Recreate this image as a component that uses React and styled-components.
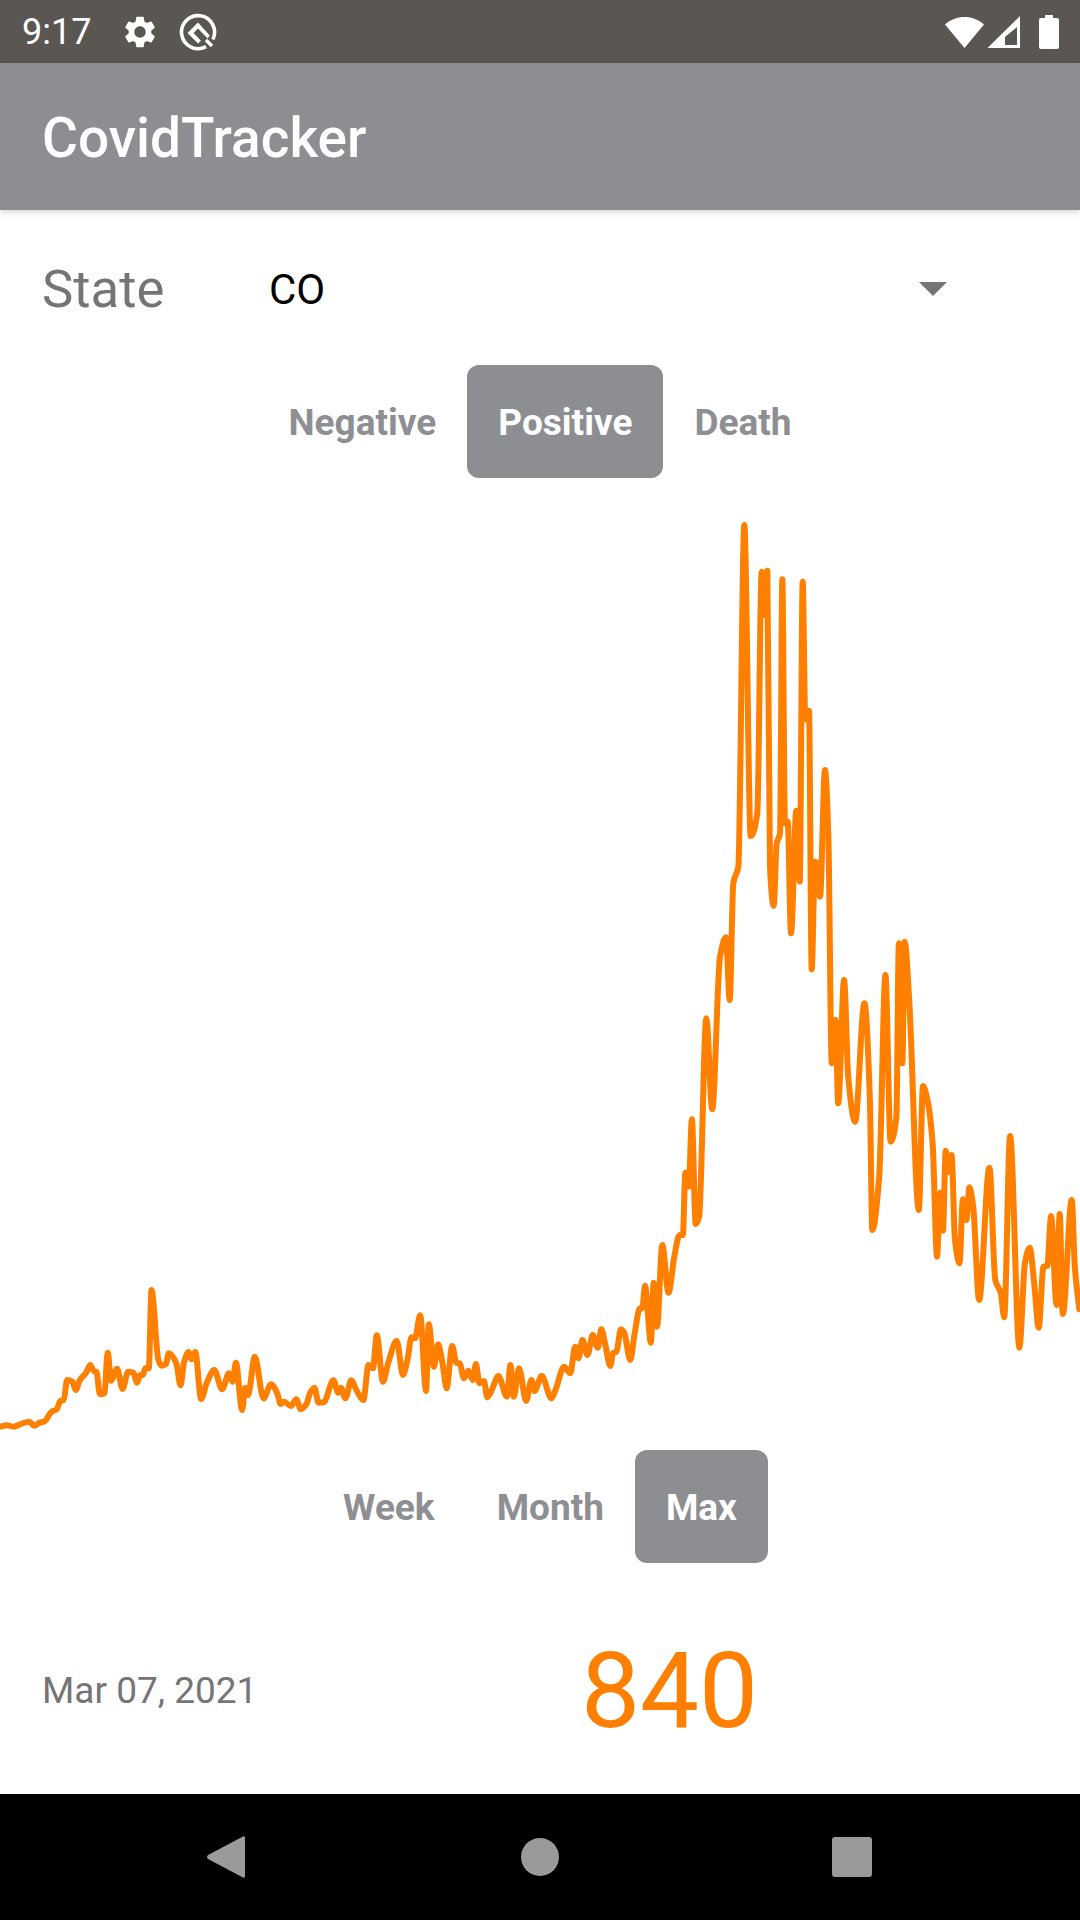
import React from "react";
import styled, { createGlobalStyle } from "styled-components";
import { MdSettings } from "react-icons/md";

const Global = createGlobalStyle`
  html, body { margin: 0; padding: 0; background: #fff; }
  * { box-sizing: border-box; }
`;

const Screen = styled.div`
  width: 1080px; height: 1920px; display: flex; flex-direction: column;
  background: #fff; overflow: hidden; font-family: Roboto, "Liberation Sans", sans-serif;
`;
const StatusBar = styled.div`
  height: 63px; flex: none; background: #5a5652; display: flex; align-items: center;
  padding: 0 21px 0 22px; color: #fff;
`;
const Clock = styled.span`font-size: 36px; width: 99px; flex: none;`;
const StatusLeft = styled.div`display: flex; align-items: center; gap: 20px; flex: 1;`;
const StatusRight = styled.div`display: flex; align-items: center;`;
const Icon = styled.svg`display: block; flex: none; margin-right: ${p => p.$mr || 0}px;`;
const AppBar = styled.header`
  height: 147px; flex: none; background: #8d8e92; display: flex; align-items: center; padding: 3px 42px 0;
  box-shadow: 0 2px 6px rgba(0,0,0,.18); position: relative;
`;
const Title = styled.h1`margin: 0; font-size: 55px; font-weight: 500; color: #fff;`;
const StateRow = styled.div`
  height: 155px; flex: none; display: flex; align-items: center; padding: 2px 42px 0;
`;
const StateLabel = styled.span`font-size: 52.7px; color: #757575; width: 227px; flex: none;`;
const StateValue = styled.span`font-size: 42px; color: #000; flex: 1; padding-top: 1px;`;
const Caret = styled.span`
  width: 0; height: 0; border-left: 14px solid transparent; border-right: 14px solid transparent;
  border-top: 14px solid #757575; margin-right: 91px;
`;
const Segments = styled.div`display: flex; justify-content: center; flex: none;`;
const Segment = styled.div`
  height: 113px; padding: 1px 31px 0; display: flex; align-items: center; border-radius: 12px;
  font-size: 37px; font-weight: 700; color: ${p => (p.$active ? "#fff" : "#8e8f93")};
  background: ${p => (p.$active ? "#8d8e92" : "transparent")};
`;
const ChartWrap = styled.div`height: 972px; flex: none; width: 1080px;`;
const Footer = styled.div`
  flex: 1; display: flex; align-items: center; padding: 26px 42px 0;
`;
const DateText = styled.span`font-size: 37px; color: #757575; width: 539px; flex: none; margin-top: -3px;`;
const Value = styled.span`font-size: 105px; color: #ff7f00;`;
const NavBar = styled.nav`
  height: 126px; flex: none; background: #000; display: flex; align-items: center; justify-content: center;
`;
const NavSlot = styled.div`width: 312px; display: flex; justify-content: center;`;

const z3 = [[0,680],[20,676],[40,680],[60,672],[85,665],[100,677],[115,668],[128,665],[150,635],[165,628],[175,603],[185,600],[195,540],[210,545],[220,570],[232,540],[250,518],[262,495],[272,513],[280,515],[290,582],[303,580],[313,458],[322,542],[340,506],[356,567],[372,515],[387,518],[398,548],[407,525],[415,525],[422,505],[432,505],[440,270],[460,480],[470,497],[482,492],[490,460],[512,490],[524,556],[535,485],[548,456],[556,478],[567,456],[584,597],[600,550],[622,510],[645,568],[665,520],[675,545],[685,488],[703,630],[712,563],[720,585],[740,470],[765,595],[787,553],[805,580],[815,612],[825,605],[845,618],[860,598],[873,627],[890,612],[900,580],[913,563],[925,608],[940,607],[968,541],[982,578],[990,563],[1003,595],[1020,541],[1035,570],[1055,600],[1070,495],[1083,505],[1094,406],[1112,545],[1127,490],[1152,422],[1170,525],[1183,480],[1195,412],[1205,415],[1220,346],[1237,573],[1245,373],[1260,500],[1272,433],[1285,490],[1297,565],[1313,438],[1325,488],[1335,490],[1347,535],[1360,512],[1373,540],[1382,492],[1392,550],[1405,543],[1415,592],[1430,565],[1447,528],[1472,590],[1482,495],[1492,590],[1507,505],[1528,603],[1543,540],[1552,573]];
const z4a = [[5,1128],[33,1195],[45,1170],[70,1100],[88,1120],[102,1040],[112,1075],[123,1020],[138,1065],[153,1005],[168,1043],[178,988],[190,1035],[204,1098],[212,1060],[222,1055],[235,988],[245,1000],[262,1080],[275,1000],[290,925],[297,925],[305,857],[322,1028],[330,848],[340,980],[355,735],[373,878],[390,770],[405,705],[415,705],[422,518],[432,560],[441,358],[452,672],[462,650],[483,55],[500,328]];
const z5 = [[120,1370],[138,1312],[149,1500],[160,1150],[175,1100],[193,75],[212,1008],[232,940],[245,215],[254,345],[262,212],[270,1100],[281,1217],[290,1030],[300,1000],[307,238],[315,970],[323,965],[333,1300],[349,932],[359,1145],[368,245],[376,658],[387,632],[395,1408],[405,1085],[412,1090],[420,1190],[435,810],[445,1000]];
const z4b = [[847,190],[858,60],[866,310],[883,-60],[895,230],[915,365],[942,10],[958,300],[965,690],[985,530],[1003,-75],[1018,425],[1035,350],[1042,-170],[1052,190],[1059,-175],[1072,0],[1100,630],[1112,258],[1125,300],[1140,430],[1153,770],[1162,578],[1170,692],[1178,452],[1186,515],[1195,465],[1205,720],[1218,790],[1228,598],[1238,660],[1247,562],[1258,620],[1275,900],[1305,503],[1322,840],[1338,880],[1348,952],[1365,408],[1392,1043],[1408,790],[1422,743],[1435,850],[1448,983],[1462,800],[1473,798],[1484,648],[1500,915],[1509,642],[1518,942],[1544,600],[1553,800],[1566,928]];

const K = 540 / 1568;
const points = [
  ...z3.map(([x, y]) => [x * K, 1200 + y / 3]),
  ...z4a.map(([x, y]) => [540 + x * K, 1000 + y / 3]),
  ...z5.map(([x, y]) => [680 + x / 3, 500 + y / 3]),
  ...z4b.map(([x, y]) => [540 + x * K, 1000 + y / 3]),
];

// monotone cubic interpolation: peaks stay at their data points and come out rounded
function monotonePath(pts) {
  const n = pts.length;
  const d = [];
  for (let i = 0; i < n - 1; i++) d.push((pts[i + 1][1] - pts[i][1]) / (pts[i + 1][0] - pts[i][0]));
  const m = pts.map((_, i) => {
    if (i === 0) return d[0];
    if (i === n - 1) return d[n - 2];
    if (d[i - 1] * d[i] <= 0) return 0;
    const h0 = pts[i][0] - pts[i - 1][0];
    const h1 = pts[i + 1][0] - pts[i][0];
    return (3 * (h0 + h1)) / ((2 * h1 + h0) / d[i - 1] + (h1 + 2 * h0) / d[i]);
  });
  let s = `M${pts[0][0].toFixed(1)} ${pts[0][1].toFixed(1)}`;
  for (let i = 0; i < n - 1; i++) {
    const h = (pts[i + 1][0] - pts[i][0]) / 3;
    s += `C${(pts[i][0] + h).toFixed(1)} ${(pts[i][1] + m[i] * h).toFixed(1)} ${(pts[i + 1][0] - h).toFixed(1)} ${(pts[i + 1][1] - m[i + 1] * h).toFixed(1)} ${pts[i + 1][0].toFixed(1)} ${pts[i + 1][1].toFixed(1)}`;
  }
  return s;
}

const QIcon = () => (
  <Icon width="38" height="38" viewBox="0 0 38 38">
    <path d="M27 33.6A16.5 16.5 0 1 1 33.8 26.5" fill="none" stroke="#fff" strokeWidth="3.6" />
    <path d="M19 9.5L8.5 20 19 30.5l3-2.8-7.4-7.7L19 15.6l9.6 9.8 2.2-3z" fill="#fff" />
    <path d="M27 27l6 6" stroke="#fff" strokeWidth="3.6" />
  </Icon>
);

const WifiIcon = () => (
  <Icon $mr={1} width="42" height="34" viewBox="0 0 42 34">
    <path d="M1 9.5C6.5 4.500 13.500 2 20.500 2S34.500 4.500 40 9.500L20.500 33z" fill="#fff" />
  </Icon>
);

const SignalIcon = () => (
  <Icon $mr={18} width="34" height="34" viewBox="0 0 34 34">
    <path d="M33 1V33H0.500Z" fill="#fff" />
    <path d="M18 22L30 12V30H18Z" fill="#5a5652" />
  </Icon>
);

const BatteryIcon = () => (
  <Icon width="20" height="34" viewBox="0 0 20 34">
    <path d="M6 0H14V3H18Q20 3 20 5V32Q20 34 18 34H2Q0 34 0 32V5Q0 3 2 3H6Z" fill="#fff" />
  </Icon>
);

export default function App() {
  return (
    <Screen>
      <Global />
      <StatusBar>
        <Clock>9:17</Clock>
        <StatusLeft>
          <MdSettings size={38} color="#fff" />
          <QIcon />
        </StatusLeft>
        <StatusRight>
          <WifiIcon />
          <SignalIcon />
          <BatteryIcon />
        </StatusRight>
      </StatusBar>
      <AppBar><Title>CovidTracker</Title></AppBar>
      <StateRow>
        <StateLabel>State</StateLabel>
        <StateValue>CO</StateValue>
        <Caret />
      </StateRow>
      <Segments>
        <Segment>Negative</Segment>
        <Segment $active>Positive</Segment>
        <Segment>Death</Segment>
      </Segments>
      <ChartWrap>
        <svg width="1080" height="972" viewBox="0 478 1080 972" style={{ display: "block" }}>
          <path d={monotonePath(points)} fill="none" stroke="#ff7f00" strokeWidth="6" strokeLinejoin="round" strokeLinecap="round" />
        </svg>
      </ChartWrap>
      <Segments>
        <Segment>Week</Segment>
        <Segment>Month</Segment>
        <Segment $active>Max</Segment>
      </Segments>
      <Footer>
        <DateText>Mar 07, 2021</DateText>
        <Value>840</Value>
      </Footer>
      <NavBar>
        <NavSlot>
          <Icon $mr={4} width="40" height="44" viewBox="0 0 40 44">
            <path d="M37 1.500Q39 0.500 39 3V41Q39 43.500 37 42.500L2 24Q0 22 2 20Z" fill="#9a9a9a" />
          </Icon>
        </NavSlot>
        <NavSlot>
          <Icon width="40" height="40" viewBox="0 0 40 40"><circle cx="20" cy="20" r="19" fill="#9a9a9a" /></Icon>
        </NavSlot>
        <NavSlot>
          <Icon width="40" height="40" viewBox="0 0 40 40"><rect width="40" height="40" rx="3" fill="#9a9a9a" /></Icon>
        </NavSlot>
      </NavBar>
    </Screen>
  );
}
